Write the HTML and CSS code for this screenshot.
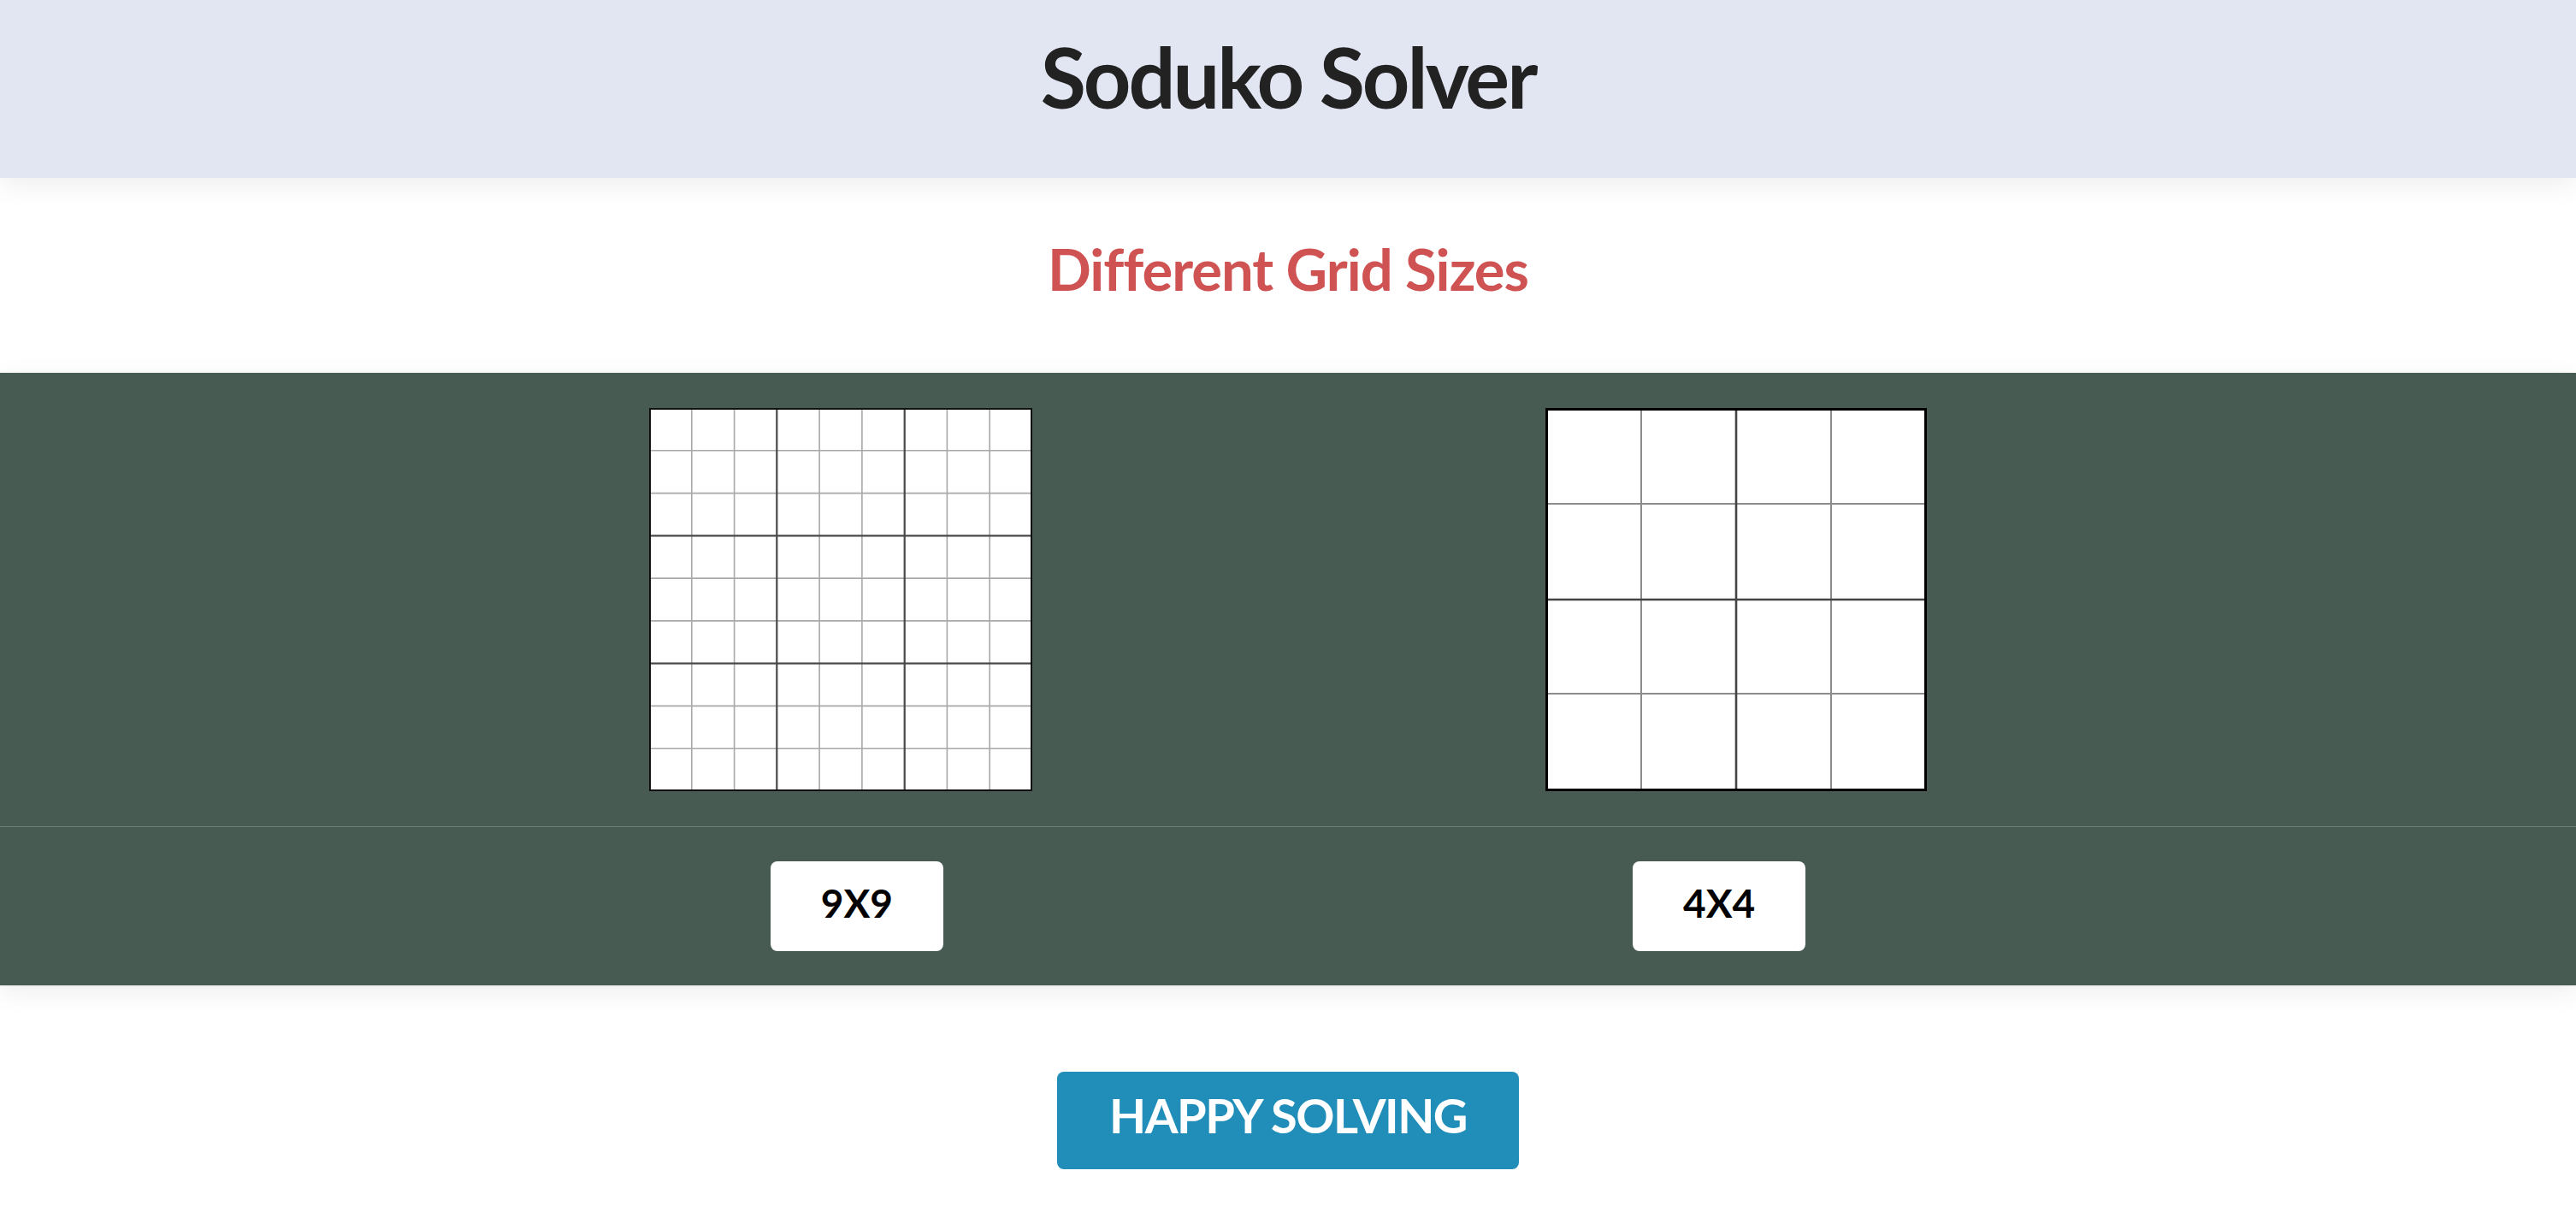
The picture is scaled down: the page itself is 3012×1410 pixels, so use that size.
FILE: index.html
```html
<!DOCTYPE html>
<html lang="en">

<head>
    <meta charset="UTF-8">
    <meta name="viewport" content="width=device-width, initial-scale=1.0">
    <title>Soduko Solver</title>
    <link rel="stylesheet" href="styles.css">
</head>

<body>
    <header class="topbar">
        <h1 class="title">Soduko Solver</h1>
    </header>

    <section class="intro">
        <h2 class="subtitle">Different Grid Sizes</h2>
    </section>

    <section class="sizes">
        <div class="boards">
            <!-- 9x9 grid -->
            <svg class="board" width="448" height="448" viewBox="0 0 448 448">
                <rect x="0" y="0" width="448" height="448" fill="#fff"/>
                <g stroke="#a8a8a8" stroke-width="1.6">
                    <line x1="49.8" y1="0" x2="49.8" y2="448"/>
                    <line x1="99.6" y1="0" x2="99.6" y2="448"/>
                    <line x1="199.1" y1="0" x2="199.1" y2="448"/>
                    <line x1="248.9" y1="0" x2="248.9" y2="448"/>
                    <line x1="348.4" y1="0" x2="348.4" y2="448"/>
                    <line x1="398.2" y1="0" x2="398.2" y2="448"/>
                    <line y1="49.8" x1="0" y2="49.8" x2="448"/>
                    <line y1="99.6" x1="0" y2="99.6" x2="448"/>
                    <line y1="199.1" x1="0" y2="199.1" x2="448"/>
                    <line y1="248.9" x1="0" y2="248.9" x2="448"/>
                    <line y1="348.4" x1="0" y2="348.4" x2="448"/>
                    <line y1="398.2" x1="0" y2="398.2" x2="448"/>
                </g>
                <g stroke="#484848" stroke-width="2.2">
                    <line x1="149.3" y1="0" x2="149.3" y2="448"/>
                    <line x1="298.7" y1="0" x2="298.7" y2="448"/>
                    <line y1="149.3" x1="0" y2="149.3" x2="448"/>
                    <line y1="298.7" x1="0" y2="298.7" x2="448"/>
                </g>
                <rect x="1" y="1" width="446" height="446" fill="none" stroke="#111" stroke-width="2"/>
            </svg>

            <!-- 4x4 grid -->
            <svg class="board" width="446" height="448" viewBox="0 0 446 448">
                <rect x="0" y="0" width="446" height="448" fill="#fff"/>
                <g stroke="#8c8c8c" stroke-width="2">
                    <line x1="112" y1="0" x2="112" y2="448"/>
                    <line x1="334" y1="0" x2="334" y2="448"/>
                    <line y1="112" x1="0" y2="112" x2="446"/>
                    <line y1="334" x1="0" y2="334" x2="446"/>
                </g>
                <g stroke="#444" stroke-width="2.6">
                    <line x1="223" y1="0" x2="223" y2="448"/>
                    <line y1="224" x1="0" y2="224" x2="446"/>
                </g>
                <rect x="1.5" y="1.5" width="443" height="445" fill="none" stroke="#000" stroke-width="3"/>
            </svg>
        </div>

        <div class="choices">
            <button class="size-btn">9X9</button>
            <button class="size-btn">4X4</button>
        </div>
    </section>

    <div class="start">
        <button class="start-btn">HAPPY SOLVING</button>
    </div>
</body>

</html>
```

FILE: styles.css
```css
body {
    margin: 0;
    padding: 0;
    background: #fff;
    font-family: Lato, "Noto Sans", sans-serif;
}
.topbar {
    position: relative;
    z-index: 2;
    height: 208px;
    background: #e2e6f3;
    box-shadow: 0 8px 30px rgba(0, 0, 0, 0.07);
    text-align: center;
}
.title {
    margin: 0;
    padding-top: 32px;
    font-size: 97px;
    line-height: 1.2;
    font-weight: 700;
    letter-spacing: -3px;
    color: #222;
}
.intro {
    height: 228px;
    text-align: center;
}
.subtitle {
    margin: 0;
    padding-top: 66px;
    font-size: 67px;
    line-height: 1.2;
    font-weight: 700;
    letter-spacing: -1px;
    color: #d05353;
}
.sizes {
    position: relative;
    z-index: 1;
    background: #475b52;
    box-shadow: 0 8px 30px rgba(0, 0, 0, 0.07), 0 0 2px rgba(0, 0, 0, 0.2);
}
.boards {
    display: flex;
    justify-content: center;
    gap: 600px;
    padding: 41px 0;
    border-bottom: 1px solid #6d7f76;
}
.board {
    display: block;
}
.choices {
    display: flex;
    justify-content: center;
    gap: 806px;
    padding: 40px 0;
}
.size-btn {
    box-sizing: border-box;
    height: 105px;
    padding: 0 59px 8px;
    border: none;
    border-radius: 8px;
    background: #fff;
    color: #000;
    font-family: Lato, "Noto Sans", sans-serif;
    font-size: 46px;
    font-weight: 700;
    line-height: 1.2;
}
.start {
    display: flex;
    justify-content: center;
    padding-top: 101px;
}
.start-btn {
    box-sizing: border-box;
    height: 114px;
    padding: 0 61px 12px;
    border: none;
    border-radius: 8px;
    background: #218eba;
    color: #fff;
    font-family: Lato, "Noto Sans", sans-serif;
    font-size: 56px;
    font-weight: 700;
    line-height: 1.2;
    letter-spacing: -1.5px;
}
```
